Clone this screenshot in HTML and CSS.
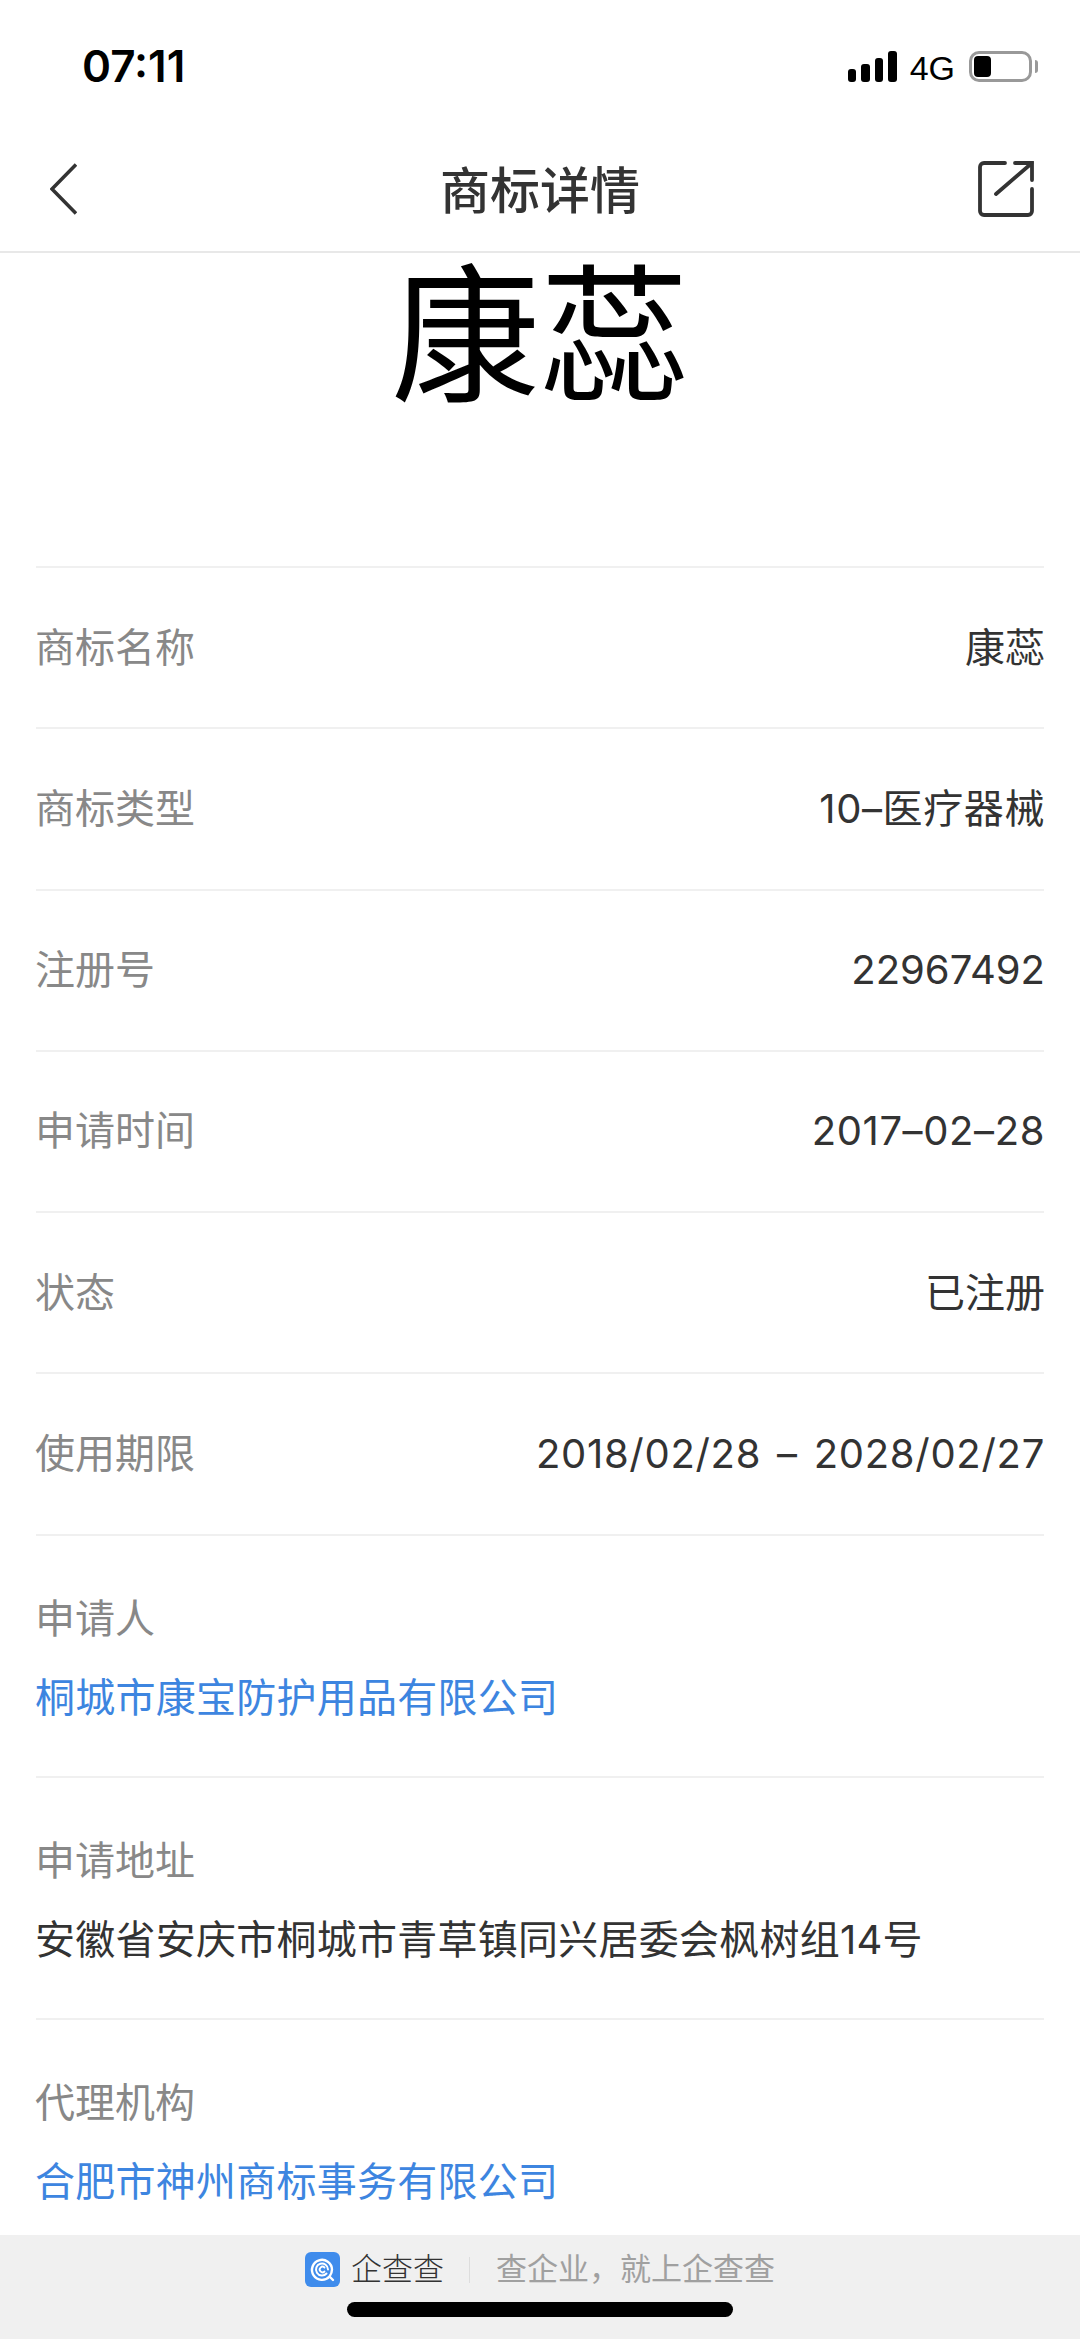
FILE: index.html
```html
<!DOCTYPE html>
<html lang="zh">
<head>
<meta charset="utf-8">
<title>商标详情</title>
<link rel="stylesheet" href="styles.css">
</head>
<body>
<div class="page">
  <div class="status">
    <span class="time">07:11</span>
    <div class="status-right">
      <div class="signal"><i class="b1"></i><i class="b2"></i><i class="b3"></i><i class="b4"></i></div>
      <span class="net">4G</span>
      <div class="battery"><div class="battery-body"><div class="battery-fill"></div></div><div class="battery-nub"></div></div>
    </div>
  </div>
  <div class="nav">
    <div class="nav-side">
      <svg class="back" width="27" height="52" viewBox="0 0 27 52"><path d="M26 1.500 2 26l24 24.500" fill="none" stroke="#333" stroke-width="3.500"/></svg>
    </div>
    <h1 class="title">商标详情</h1>
    <div class="nav-side nav-side-right">
      <svg class="share" width="56" height="56" viewBox="0 0 56 56"><path d="M27 2H6a4 4 0 0 0-4 4v44a4 4 0 0 0 4 4h44a4 4 0 0 0 4-4V28M37 2h17v17M54 2 18 33" fill="none" stroke="#333" stroke-width="3.800" stroke-linecap="round"/></svg>
    </div>
  </div>
  <main class="main">
    <div class="mark">康蕊</div>
    <div class="row"><span class="label">商标名称</span><span class="value">康蕊</span></div>
    <div class="row"><span class="label">商标类型</span><span class="value wide">10–医疗器械</span></div>
    <div class="row"><span class="label">注册号</span><span class="value">22967492</span></div>
    <div class="row"><span class="label">申请时间</span><span class="value wide">2017–02–28</span></div>
    <div class="row"><span class="label">状态</span><span class="value">已注册</span></div>
    <div class="row"><span class="label">使用期限</span><span class="value wide range">2018/02/28 – 2028/02/27</span></div>
    <div class="block"><div class="label">申请人</div><div class="value link">桐城市康宝防护用品有限公司</div></div>
    <div class="block"><div class="label">申请地址</div><div class="value">安徽省安庆市桐城市青草镇同兴居委会枫树组14号</div></div>
    <div class="block block-last"><div class="label">代理机构</div><div class="value link">合肥市神州商标事务有限公司</div></div>
  </main>
  <footer class="footer">
    <div class="brand">
      <svg class="logo" width="35" height="35" viewBox="0 0 35 35"><rect width="35" height="35" rx="6" fill="#3f8cec"/><path d="M24.500 24.500A10 10 0 1 1 27 17.500c0 3-1 5-2.500 7l3.500 3.500" fill="none" stroke="#fff" stroke-width="2.400" stroke-linecap="round"/><path d="M21.500 21.500A6 6 0 1 1 23 17.500" fill="none" stroke="#fff" stroke-width="2" stroke-linecap="round"/><path d="M19.500 15.500A2.800 2.800 0 1 0 19.500 19.500" fill="none" stroke="#fff" stroke-width="1.800" stroke-linecap="round"/></svg>
      <span class="brand-name">企查查</span>
      <span class="sep"></span>
      <span class="slogan">查企业，就上企查查</span>
    </div>
    <div class="home"></div>
  </footer>
</div>
</body>
</html>
```
FILE: styles.css
```css
* { box-sizing: border-box; margin: 0; padding: 0; }
html, body { background: #fff; }
body { font-family: Inter, "Noto Sans CJK SC", sans-serif; color: #333; }
.page { width: 1080px; height: 2339px; display: flex; flex-direction: column; overflow: hidden; }

.status { height: 132px; flex: none; display: flex; justify-content: space-between; padding: 44px 42px 0 82px; }
.time { font-family: Inter, sans-serif; font-weight: 600; font-size: 44px; line-height: 44px; color: #000; }
.status-right { display: flex; align-items: flex-start; padding-top: 7px; }
.signal { display: flex; align-items: flex-end; gap: 5px; height: 31px; }
.signal i { display: block; width: 8.500px; background: #000; border-radius: 3px; }
.b1 { height: 13px; }
.b2 { height: 18px; }
.b3 { height: 24px; }
.b4 { height: 31px; }
.net { font-family: "Liberation Sans", sans-serif; font-size: 34px; line-height: 34px; color: #000; margin: 0 14px 0 13px; }
.battery { display: flex; align-items: center; height: 31px; }
.battery-body { width: 63px; height: 31px; border: 3px solid #999; border-radius: 10px; padding: 2px; }
.battery-fill { width: 17px; height: 100%; background: #000; border-radius: 4px; }
.battery-nub { width: 3px; height: 13px; background: #999; border-radius: 0 3px 3px 0; margin-left: 3px; }

.nav { height: 121px; flex: none; display: flex; align-items: center; justify-content: space-between; padding: 0 46px; border-bottom: 2px solid #e8e8e8; }
.nav-side { width: 84px; display: flex; padding-left: 4px; }
.nav-side-right { justify-content: flex-end; padding-left: 0; }
.title { font-size: 50px; font-weight: 500; line-height: 60px; color: #333; margin-bottom: 2px; }
.back { margin-bottom: 5px; }
.share { margin-bottom: 5px; }

.main { flex: 1; min-height: 0; padding: 0 36px; }
.mark { height: 315px; font-size: 149px; line-height: 166px; text-align: center; color: #000; border-bottom: 2px solid #f0f0f0; }
.row { height: 161.250px; display: flex; align-items: center; justify-content: space-between; border-bottom: 2px solid #f0f0f0; }
.block { height: 242px; padding-top: 55px; border-bottom: 2px solid #f0f0f0; }
.block-last { height: 216px; border-bottom: 0; }
.label { font-size: 40px; line-height: 56px; color: #888; margin-left: -1px; }
.value { font-size: 40px; line-height: 56px; color: #333; margin-right: -1px; }
.wide { letter-spacing: 0.6px; }
.range { letter-spacing: 0.7px; word-spacing: 4px; }
.block .value { margin-top: 23px; margin-left: -1px; letter-spacing: 0.250px; }
.block .link { color: #3d85e0; }

.footer { height: 104px; flex: none; background: #f0f0f0; display: flex; flex-direction: column; align-items: center; padding-top: 17px; }
.brand { display: flex; align-items: center; height: 35px; }
.brand-name { font-size: 31px; font-weight: 300; line-height: 35px; color: #333; margin-left: 11px; margin-bottom: 3px; }
.sep { width: 1px; height: 26px; background: #ddd; margin: 0 26px 0 25px; }
.slogan { font-size: 31px; line-height: 35px; color: #a0a0a0; margin-bottom: 3px; }
.home { width: 386px; height: 15px; background: #000; border-radius: 8px; margin-top: 15px; }
```
